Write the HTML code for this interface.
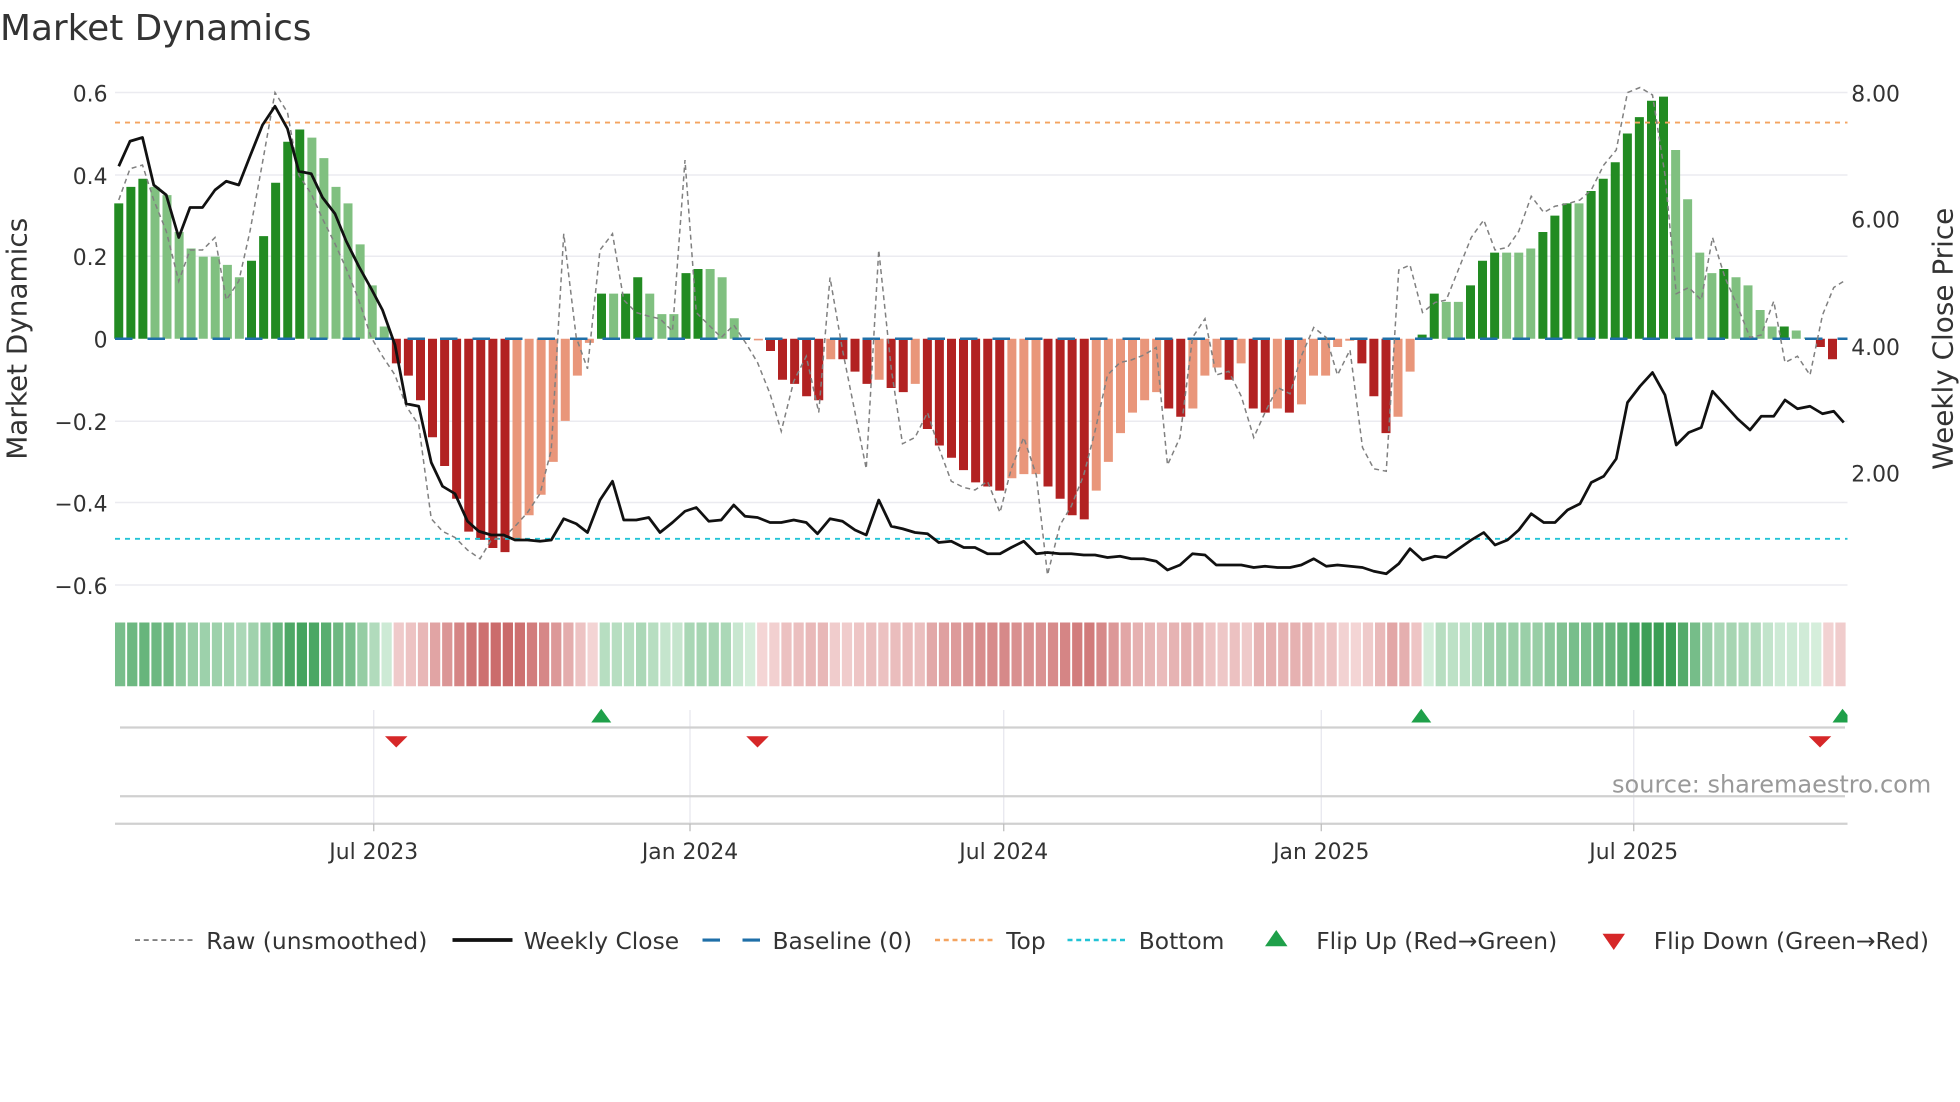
<!DOCTYPE html>
<html><head><meta charset="utf-8"><style>
html,body{margin:0;padding:0;background:#fff;width:1960px;height:1102px;overflow:hidden}
svg{display:block}
text{font-family:"DejaVu Sans","Liberation Sans",sans-serif;fill:#333}
</style></head><body>
<svg id="s" width="1960" height="1102" viewBox="0 0 1568 881.6" xmlns="http://www.w3.org/2000/svg">
<rect width="1568" height="882" fill="#fff"/>
<text x="0" y="32" font-size="28.7">Market Dynamics</text>
<g stroke="#ebebf0" stroke-width="1.2">
<line x1="92" x2="1478" y1="74" y2="74"/><line x1="92" x2="1478" y1="140" y2="140"/>
<line x1="92" x2="1478" y1="205" y2="205"/><line x1="92" x2="1478" y1="337" y2="337"/>
<line x1="92" x2="1478" y1="402" y2="402"/><line x1="92" x2="1478" y1="468" y2="468"/>
</g>
<g font-size="17.5" text-anchor="end">
<text x="86" y="81">0.6</text><text x="86" y="147">0.4</text><text x="86" y="212">0.2</text>
<text x="86" y="278">0</text><text x="86" y="344">−0.2</text><text x="86" y="409">−0.4</text><text x="86" y="475">−0.6</text>
</g>
<g font-size="17.5">
<text x="1481" y="81">8.00</text><text x="1481" y="182">6.00</text><text x="1481" y="284">4.00</text><text x="1481" y="385">2.00</text>
</g>
<text font-size="22.3" transform="translate(21,271) rotate(-90)" text-anchor="middle">Market Dynamics</text>
<text font-size="22.3" transform="translate(1562,271) rotate(-90)" text-anchor="middle">Weekly Close Price</text>
<g id="bars"></g>
<line x1="92" x2="1478" y1="98" y2="98" stroke="#f4a460" stroke-width="1.5" stroke-dasharray="4,4"/>
<line x1="92" x2="1478" y1="431" y2="431" stroke="#22c3d6" stroke-width="1.5" stroke-dasharray="4,4"/>
<line x1="92" x2="1478" y1="271" y2="271" stroke="#1f6fa8" stroke-width="2" stroke-dasharray="14,12"/>
<polyline id="raw" fill="none" stroke="#808080" stroke-width="1.2" stroke-dasharray="4,3"/>
<polyline id="cls" fill="none" stroke="#111" stroke-width="2.2" stroke-linejoin="round"/>
<g id="strip"></g>
<g stroke="#e6e6ee" stroke-width="1">
<line x1="299" x2="299" y1="568" y2="658"/><line x1="552" x2="552" y1="568" y2="658"/>
<line x1="803" x2="803" y1="568" y2="658"/><line x1="1057" x2="1057" y1="568" y2="658"/>
<line x1="1307" x2="1307" y1="568" y2="658"/>
</g>
<line x1="96" x2="1476" y1="582" y2="582" stroke="#d0d0d0" stroke-width="1.8"/>
<line x1="96" x2="1476" y1="637" y2="637" stroke="#d0d0d0" stroke-width="1.8"/>
<line x1="92" x2="1478" y1="659" y2="659" stroke="#d0d0d0" stroke-width="1.8"/>
<g stroke="#bbb" stroke-width="1"><line x1="299" x2="299" y1="659" y2="665"/><line x1="552" x2="552" y1="659" y2="665"/><line x1="803" x2="803" y1="659" y2="665"/><line x1="1057" x2="1057" y1="659" y2="665"/><line x1="1307" x2="1307" y1="659" y2="665"/></g>
<g fill="#1fa04a"><path d="M473,578 L481,567 L489,578Z"/><path d="M1129,578 L1137,567 L1145,578Z"/><path d="M1466,578 L1474,567 L1478,572 L1478,578Z"/></g>
<g fill="#d62728"><path d="M308,589 L326,589 L317,598Z"/><path d="M597,589 L615,589 L606,598Z"/><path d="M1447,589 L1465,589 L1456,598Z"/></g>
<text x="1545" y="634" font-size="19.2" text-anchor="end" style="fill:#999">source: sharemaestro.com</text>
<g font-size="17.5" text-anchor="middle">
<text x="299" y="687">Jul 2023</text><text x="552" y="687">Jan 2024</text><text x="803" y="687">Jul 2024</text><text x="1057" y="687">Jan 2025</text><text x="1307" y="687">Jul 2025</text>
</g>
<g font-size="18.7">
<line x1="108" x2="154" y1="752" y2="752" stroke="#808080" stroke-width="1.5" stroke-dasharray="4,3"/>
<text x="165" y="759">Raw (unsmoothed)</text>
<line x1="362" x2="410" y1="752" y2="752" stroke="#111" stroke-width="3"/>
<text x="419" y="759">Weekly Close</text>
<line x1="562" x2="608" y1="752" y2="752" stroke="#1f6fa8" stroke-width="2.5" stroke-dasharray="14,18"/>
<text x="618" y="759">Baseline (0)</text>
<line x1="748" x2="794" y1="752" y2="752" stroke="#f4a460" stroke-width="2" stroke-dasharray="4,3"/>
<text x="805" y="759">Top</text>
<line x1="854" x2="900" y1="752" y2="752" stroke="#22c3d6" stroke-width="2" stroke-dasharray="4,3"/>
<text x="911" y="759">Bottom</text>
<path d="M1012,757 L1021,744 L1030,757Z" fill="#1fa04a"/>
<text x="1053" y="759">Flip Up (Red→Green)</text>
<path d="M1282,747 L1300,747 L1291,760Z" fill="#d62728"/>
<text x="1323" y="759">Flip Down (Green→Red)</text>
</g>
</svg>
<script>
var D='D',L='L',R='R',P='P';
var b=[[.33,D],[.37,D],[.39,D],[.37,L],[.35,L],[.26,L],[.22,L],[.20,L],[.20,L],[.18,L],[.15,L],[.19,D],[.25,D],[.38,D],[.48,D],[.51,D],[.49,L],[.44,L],[.37,L],[.33,L],[.23,L],[.13,L],[.03,L],
[-.06,R],[-.09,R],[-.15,R],[-.24,R],[-.31,R],[-.39,R],[-.47,R],[-.49,R],[-.51,R],[-.52,R],[-.49,P],[-.43,P],[-.38,P],[-.30,P],[-.20,P],[-.09,P],[-.01,P],
[.11,D],[.11,L],[.11,D],[.15,D],[.11,L],[.06,L],[.06,L],[.16,D],[.17,D],[.17,L],[.15,L],[.05,L],[.003,L],[-.004,P],
[-.03,R],[-.10,R],[-.11,R],[-.14,R],[-.15,R],[-.05,P],[-.05,R],[-.08,R],[-.11,R],[-.10,P],[-.12,R],[-.13,R],[-.11,P],
[-.22,R],[-.26,R],[-.29,R],[-.32,R],[-.35,R],[-.36,R],[-.37,R],[-.34,P],[-.33,P],[-.33,P],
[-.36,R],[-.39,R],[-.43,R],[-.44,R],[-.37,P],[-.30,P],[-.23,P],[-.18,P],[-.15,P],[-.13,P],[-.17,R],[-.19,R],[-.17,P],[-.09,P],[-.07,P],[-.10,R],[-.06,P],[-.17,R],[-.18,R],[-.17,P],[-.18,R],[-.16,P],[-.09,P],[-.09,P],[-.02,P],[-.005,P],[-.06,R],[-.14,R],[-.23,R],[-.19,P],[-.08,P],
[.01,D],[.11,D],[.09,L],[.09,L],[.13,D],[.19,D],[.21,D],[.21,L],[.21,L],[.22,L],[.26,D],[.30,D],[.33,D],[.33,L],[.36,D],[.39,D],[.43,D],[.50,D],[.54,D],[.58,D],[.59,D],[.46,L],[.34,L],[.21,L],[.16,L],[.17,D],[.15,L],[.13,L],[.07,L],[.03,L],[.03,D],[.02,L],[.003,L],[-.02,R],[-.05,R]];
var col={D:'#228b22',L:'#80c080',R:'#b22222',P:'#e9967a'};
var n=b.length,step=(1466-95)/(n-1),h='',s='';
function mix(a,c,t){return 'rgb('+a.map(function(v,i){return Math.round(v+(c[i]-v)*t)}).join(',')+')'}
for(var i=0;i<n;i++){var x=95+i*step,v=b[i][0],y0=271,hh=Math.abs(v)*328.3;
var y=v>=0?y0-hh:y0;h+='<rect x="'+(x-3.6).toFixed(1)+'" y="'+y.toFixed(1)+'" width="7.2" height="'+hh.toFixed(1)+'" fill="'+col[b[i][1]]+'"/>';
var t=Math.min(1,Math.abs(v)/0.55),c=v>=0?mix([214,238,220],[58,158,85],t):mix([244,214,214],[200,100,100],t);
s+='<rect x="'+(92+i*(1386/n)).toFixed(1)+'" y="498" width="'+(1386/n-1.5).toFixed(2)+'" height="51" fill="'+c+'"/>';}
document.getElementById('bars').innerHTML=h;document.getElementById('strip').innerHTML=s;
document.getElementById('cls').setAttribute('points',"95,133 104,113 114,110 123,148 133,156 143,190 152,166 162,166 172,152 181,145 191,148 200,125 210,100 220,85 230,103 239,137 249,139 258,158 268,171 277,193 287,213 297,231 306,248 316,276 325,323 335,325 345,370 354,389 364,395 374,417 383,425 393,428 403,428 412,432 422,432 432,433 441,432 451,415 461,419 470,426 480,400 490,385 499,416 509,416 519,414 528,426 538,418 548,409 557,406 567,417 577,416 587,404 596,413 606,414 616,418 625,418 635,416 645,418 654,427 664,415 674,417 684,424 693,428 703,400 713,421 722,423 732,426 742,427 751,434 761,433 771,438 780,438 790,443 800,443 809,438 819,433 829,443 838,442 848,443 857,443 867,444 876,444 886,446 896,445 905,447 915,447 925,449 934,456 944,452 954,443 964,444 973,452 983,452 993,452 1003,454 1012,453 1022,454 1032,454 1041,452 1051,447 1061,453 1070,452 1080,453 1090,454 1099,457 1109,459 1119,451 1128,439 1138,448 1148,445 1157,446 1167,439 1177,432 1187,426 1196,436 1206,432 1215,424 1225,411 1235,418 1244,418 1254,408 1264,403 1273,386 1283,381 1293,367 1302,322 1312,309 1322,298 1332,316 1341,356 1351,346 1361,342 1370,313 1380,324 1390,335 1400,344 1409,333 1419,333 1428,320 1438,327 1448,325 1458,331 1467,329 1475,338");
document.getElementById('raw').setAttribute('points',"95,160 104,135 114,132 123,160 133,185 143,225 152,200 162,200 172,190 181,240 191,225 200,185 210,130 220,74 230,90 239,140 249,155 258,175 268,195 277,215 287,240 297,270 306,285 316,300 325,325 335,340 345,415 354,425 364,430 374,440 384,447 393,432 403,430 413,420 422,410 432,395 441,360 451,187 461,270 470,295 480,200 490,187 499,240 509,250 519,253 528,255 538,265 548,128 557,250 567,260 577,270 587,260 597,275 606,290 616,315 625,345 635,305 645,285 655,330 664,222 674,280 684,330 693,375 703,200 713,295 722,355 732,350 742,330 751,358 761,385 771,390 780,392 790,385 800,410 809,375 819,350 829,380 838,460 848,420 857,405 867,380 876,345 886,300 896,290 905,288 915,284 925,278 934,372 944,350 954,270 964,255 973,300 983,297 993,317 1003,350 1012,330 1022,310 1032,315 1041,285 1051,262 1061,270 1070,300 1080,280 1090,358 1099,375 1109,377 1119,216 1128,212 1138,250 1148,242 1157,240 1167,215 1177,190 1187,176 1196,200 1206,198 1215,185 1225,157 1235,170 1244,165 1254,163 1264,160 1273,152 1283,132 1293,120 1302,74 1312,70 1322,76 1332,140 1341,235 1351,230 1361,240 1370,190 1380,222 1390,245 1400,270 1409,268 1419,241 1428,290 1438,285 1448,300 1458,252 1467,230 1475,225");
</script>
</body></html>
